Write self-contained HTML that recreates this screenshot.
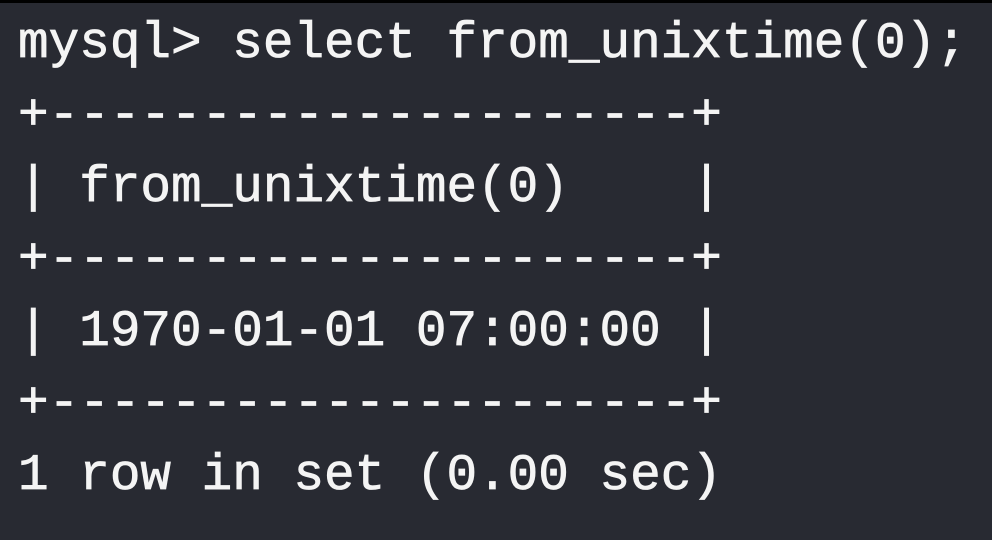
<!DOCTYPE html>
<html><head><meta charset="utf-8"><style>
html,body{margin:0;padding:0;}
body{width:992px;height:540px;background:#000;position:relative;overflow:hidden;}
.t{position:absolute;left:0;top:3px;width:992px;height:537px;background:#282a32;}
pre{position:absolute;left:18px;top:6px;margin:0;font-family:"Liberation Mono",monospace;font-size:51px;line-height:72px;color:#f4f4f4;-webkit-text-stroke:0.8px #f4f4f4;white-space:pre;}
</style></head><body><div class="t"><pre>mysql&gt; select from_unixtime(0);
+---------------------+
| from_unixtime(0)    |
+---------------------+
| 1970-01-01 07:00:00 |
+---------------------+
1 row in set (0.00 sec)</pre></div></body></html>
